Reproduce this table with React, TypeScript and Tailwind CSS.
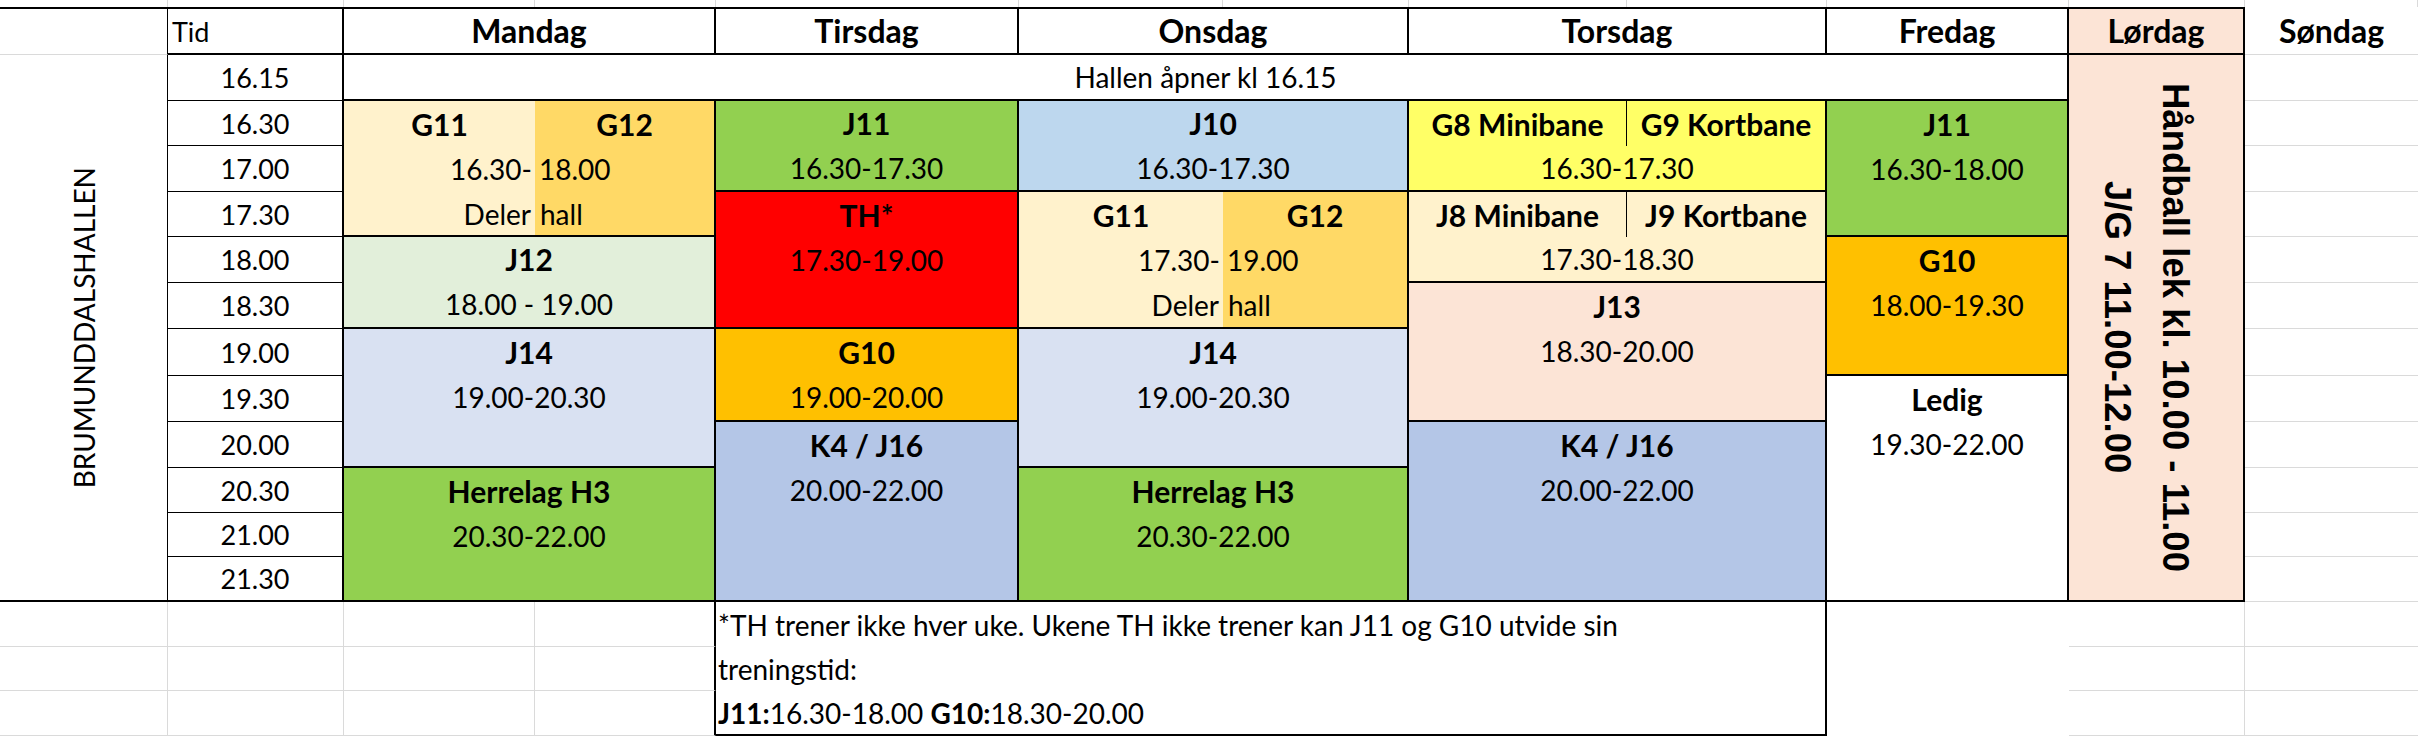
import React from "react";

type Slot = { pos: string; bg: string; label: string; time: string };

const times = [
  { t: "16.15", pos: "row-start-3" },
  { t: "16.30", pos: "row-start-4" },
  { t: "17.00", pos: "row-start-5" },
  { t: "17.30", pos: "row-start-6" },
  { t: "18.00", pos: "row-start-7" },
  { t: "18.30", pos: "row-start-8" },
  { t: "19.00", pos: "row-start-9" },
  { t: "19.30", pos: "row-start-10" },
  { t: "20.00", pos: "row-start-11" },
  { t: "20.30", pos: "row-start-12" },
  { t: "21.00", pos: "row-start-13" },
  { t: "21.30", pos: "row-start-14 !border-b-2" },
];

const days = [
  { name: "Mandag", pos: "col-start-3 col-span-2" },
  { name: "Tirsdag", pos: "col-start-5" },
  { name: "Onsdag", pos: "col-start-6 col-span-2" },
  { name: "Torsdag", pos: "col-start-8 col-span-2" },
  { name: "Fredag", pos: "col-start-10" },
  { name: "Lørdag", pos: "col-start-11 bg-[#fce4d6]" },
];

const slots: Slot[] = [
  { pos: "col-start-3 col-span-2 row-start-7 row-span-2", bg: "bg-[#e2efda]", label: "J12", time: "18.00 - 19.00" },
  { pos: "col-start-3 col-span-2 row-start-9 row-span-3", bg: "bg-[#d9e1f2]", label: "J14", time: "19.00-20.30" },
  { pos: "col-start-3 col-span-2 row-start-12 row-span-3", bg: "bg-[#92d050]", label: "Herrelag H3", time: "20.30-22.00" },
  { pos: "col-start-5 row-start-4 row-span-2", bg: "bg-[#92d050]", label: "J11", time: "16.30-17.30" },
  { pos: "col-start-5 row-start-6 row-span-3", bg: "bg-[#ff0000]", label: "TH*", time: "17.30-19.00" },
  { pos: "col-start-5 row-start-9 row-span-2", bg: "bg-[#ffc000]", label: "G10", time: "19.00-20.00" },
  { pos: "col-start-5 row-start-11 row-span-4", bg: "bg-[#b4c6e7]", label: "K4 / J16", time: "20.00-22.00" },
  { pos: "col-start-6 col-span-2 row-start-4 row-span-2", bg: "bg-[#bdd7ee]", label: "J10", time: "16.30-17.30" },
  { pos: "col-start-6 col-span-2 row-start-9 row-span-3", bg: "bg-[#d9e1f2]", label: "J14", time: "19.00-20.30" },
  { pos: "col-start-6 col-span-2 row-start-12 row-span-3", bg: "bg-[#92d050]", label: "Herrelag H3", time: "20.30-22.00" },
  { pos: "col-start-8 col-span-2 row-start-8 row-span-3", bg: "bg-[#fce4d6]", label: "J13", time: "18.30-20.00" },
  { pos: "col-start-8 col-span-2 row-start-11 row-span-4", bg: "bg-[#b4c6e7]", label: "K4 / J16", time: "20.00-22.00" },
  { pos: "col-start-10 row-start-4 row-span-3", bg: "bg-[#92d050]", label: "J11", time: "16.30-18.00" },
  { pos: "col-start-10 row-start-7 row-span-3", bg: "bg-[#ffc000]", label: "G10", time: "18.00-19.30" },
  { pos: "col-start-10 row-start-10 row-span-5", bg: "bg-white", label: "Ledig", time: "19.30-22.00" },
];

// spreadsheet gridlines outside the bordered table
const topStrip = [
  "col-start-1", "col-start-2", "col-start-3", "col-start-4", "col-start-5", "col-start-6",
  "col-start-7", "col-start-8", "col-start-9", "col-start-10", "col-start-11", "col-start-12",
];

const sundayRows = [
  "row-start-3", "row-start-4", "row-start-5", "row-start-6", "row-start-7",
  "row-start-8", "row-start-9", "row-start-10", "row-start-11", "row-start-12",
  "row-start-13", "row-start-14", "row-start-15", "row-start-16", "row-start-17",
];

const belowCells = [
  "col-start-1 row-start-15", "col-start-1 row-start-16", "col-start-1 row-start-17",
  "col-start-2 row-start-15", "col-start-2 row-start-16", "col-start-2 row-start-17",
  "col-start-3 row-start-15", "col-start-3 row-start-16", "col-start-3 row-start-17",
  "col-start-11 row-start-15", "col-start-11 row-start-16", "col-start-11 row-start-17",
];

function SlotBlock({ s }: { s: Slot }) {
  return (
    <div className={`${s.pos} ${s.bg} border-r-2 border-b-2 border-black flex flex-col`}>
      <div className="h-[45px] flex items-center justify-center text-[30px] font-bold">{s.label}</div>
      <div className="h-[46px] flex items-center justify-center">{s.time}</div>
    </div>
  );
}

function SharedHall({ pos, split, left, right, from, to }: { pos: string; split: string; left: string; right: string; from: string; to: string }) {
  return (
    <div className={`${pos} border-r-2 border-b-2 border-black grid ${split}`}>
      <div className="bg-[#fff2cc] grid grid-rows-[45px_46px_1fr]">
        <div className="flex items-center justify-center text-[30px] font-bold">{left}</div>
        <div className="flex items-center justify-end pr-[3px]">{from}</div>
        <div className="flex items-center justify-end pr-[4px]">Deler</div>
      </div>
      <div className="bg-[#ffd966] grid grid-rows-[45px_46px_1fr]">
        <div className="flex items-center justify-center text-[30px] font-bold">{right}</div>
        <div className="flex items-center pl-[4px]">{to}</div>
        <div className="flex items-center pl-[5px]">hall</div>
      </div>
    </div>
  );
}

function PairBlock({ pos, bg, left, right, time }: { pos: string; bg: string; left: string; right: string; time: string }) {
  return (
    <div className={`${pos} ${bg} border-r-2 border-b-2 border-black grid grid-cols-[218px_1fr] grid-rows-[45px_1fr]`}>
      <div className="border-r border-black flex items-center justify-center text-[30px] font-bold whitespace-nowrap">{left}</div>
      <div className="flex items-center justify-center text-[30px] font-bold whitespace-nowrap">{right}</div>
      <div className="col-span-2 flex items-center justify-center">{time}</div>
    </div>
  );
}

export default function App() {
  return (
    <div className="w-[2418px] h-[738px] bg-white text-black overflow-hidden [font-family:Lato,'Noto_Sans',sans-serif] text-[28px] leading-none">
      <div className="grid grid-cols-[168px_176px_191px_181px_303px_204px_186px_218px_200px_242px_176px_173px] grid-rows-[7px_48px_46px_45px_46px_45px_46px_46px_47px_46px_46px_45px_44px_45px_45px_44px_45px]">
        {topStrip.map((c) => (
          <div key={c} className={`${c} row-start-1 border-r border-[#dadada]`} />
        ))}

        {/* header row */}
        <div className="col-start-1 row-start-2 border-t-2 border-t-black border-b border-b-[#dadada] border-r border-r-black" />
        <div className="col-start-2 row-start-2 border-t-2 border-b-2 border-r-2 border-black flex items-center pl-[4px] text-[27px]">Tid</div>
        {days.map((d) => (
          <div key={d.name} className={`${d.pos} row-start-2 border-t-2 border-b-2 border-r-2 border-black flex items-center justify-center text-[32px] font-bold`}>
            {d.name}
          </div>
        ))}
        <div className="col-start-12 row-start-2 border-b border-[#dadada] flex items-center justify-center text-[32px] font-bold">Søndag</div>

        {/* hall name */}
        <div className="col-start-1 row-start-3 row-span-12 border-r border-b-2 border-black flex items-center justify-center">
          <div className="[writing-mode:vertical-rl] rotate-180 text-[28px] whitespace-nowrap">BRUMUNDDALSHALLEN</div>
        </div>

        {/* time column */}
        {times.map((t) => (
          <div key={t.t} className={`col-start-2 ${t.pos} border-b border-r-2 border-black flex items-center justify-center text-[27px]`}>
            {t.t}
          </div>
        ))}

        <div className="col-start-3 col-span-8 row-start-3 border-r-2 border-b-2 border-black flex items-center justify-center">
          Hallen åpner kl 16.15
        </div>

        <SharedHall pos="col-start-3 col-span-2 row-start-4 row-span-3" split="grid-cols-[191px_1fr]" left="G11" right="G12" from="16.30-" to="18.00" />
        <SharedHall pos="col-start-6 col-span-2 row-start-6 row-span-3" split="grid-cols-[204px_1fr]" left="G11" right="G12" from="17.30-" to="19.00" />
        <PairBlock pos="col-start-8 col-span-2 row-start-4 row-span-2" bg="bg-[#ffff66]" left="G8 Minibane" right="G9 Kortbane" time="16.30-17.30" />
        <PairBlock pos="col-start-8 col-span-2 row-start-6 row-span-2" bg="bg-[#fff2cc]" left="J8 Minibane" right="J9 Kortbane" time="17.30-18.30" />

        {slots.map((s) => (
          <SlotBlock key={s.pos} s={s} />
        ))}

        {/* Saturday */}
        <div className="col-start-11 row-start-3 row-span-12 bg-[#fce4d6] border-r-2 border-b-2 border-black flex items-center justify-center pr-[20px]">
          <div className="[writing-mode:vertical-rl] text-center [font-family:'Liberation_Sans',Arial,sans-serif] font-bold text-[36.5px] leading-[58px] whitespace-nowrap">
            <div>Håndball lek kl. 10.00 - 11.00</div>
            <div>J/G 7 11.00-12.00</div>
          </div>
        </div>

        {sundayRows.map((r) => (
          <div key={r} className={`col-start-12 ${r} border-b border-[#dadada]`} />
        ))}

        {/* below the table */}
        {belowCells.map((c) => (
          <div key={c} className={`${c} border-r border-b border-[#dadada]`} />
        ))}
        <div className="col-start-4 row-start-15 border-b border-b-[#dadada] border-r-2 border-r-black" />
        <div className="col-start-4 row-start-16 border-b border-b-[#dadada] border-r-2 border-r-black" />
        <div className="col-start-4 row-start-17 border-b border-b-[#dadada] border-r-2 border-r-black" />

        <div className="col-start-5 col-span-5 row-start-15 row-span-3 border-r-2 border-b-2 border-black grid grid-rows-[45px_44px_1fr] pl-[2px]">
          <div className="flex items-center whitespace-nowrap">*TH trener ikke hver uke. Ukene TH ikke trener kan J11 og G10 utvide sin</div>
          <div className="flex items-center">treningstid:</div>
          <div className="flex items-center whitespace-pre">
            <span><b>J11:</b>16.30-18.00 <b>G10:</b>18.30-20.00</span>
          </div>
        </div>
      </div>
    </div>
  );
}
